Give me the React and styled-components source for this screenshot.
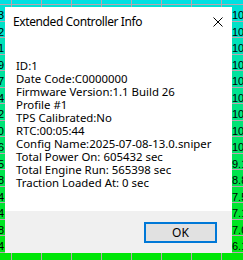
import React from "react";
import styled, { createGlobalStyle } from "styled-components";

const Global = createGlobalStyle`
  html, body { margin: 0; padding: 0; }
  body {
    width: 243px;
    height: 260px;
    overflow: hidden;
    position: relative;
    font-family: "Noto Sans", "Open Sans", sans-serif;
  }
`;

const ROW_H = 16.5;
const COLS = 9;

const Grid = styled.div`
  display: flex;
  flex-direction: column;
  margin-top: -11.5px;
  margin-left: -18px;
  width: 261px;
  overflow: hidden;
`;

const Row = styled.div`
  display: grid;
  grid-template-columns: repeat(${COLS}, 30px);
  height: ${ROW_H}px;
  box-sizing: border-box;
  border-bottom: 1px solid #b9a4ae;
  background: ${(p) => p.$bg};
`;

const Cell = styled.div`
  box-sizing: border-box;
  border-right: 1px solid #b9a4ae;
  font-family: "Liberation Sans", Arial, sans-serif;
  font-size: 11px;
  line-height: 12px;
  color: #000;
  white-space: nowrap;
  overflow: hidden;
  text-align: ${(p) => (p.$first ? "right" : "left")};
  padding: ${(p) => (p.$first ? "4px 7px 0 0" : "4px 0 0 10px")};
`;

const Dialog = styled.div`
  position: absolute;
  left: 5px;
  top: 7px;
  width: 227px;
  height: 246px;
  background: #fff;
  display: flex;
  flex-direction: column;
`;

const TitleBar = styled.div`
  display: flex;
  align-items: center;
  justify-content: space-between;
  height: 30px;
  padding: 0 9px 0 8px;
  box-sizing: border-box;
`;

const Title = styled.div`
  font-size: 12px;
  letter-spacing: -0.4px;
  color: #000;
  margin-top: -2px;
`;

const Close = styled.svg`
  width: 10px;
  height: 10px;
`;

const Body = styled.div`
  flex: 1;
  padding: 22px 0 0 11px;
  font-size: 11.4px;
  line-height: 13px;
  color: #000;
`;

const Line = styled.div`
  white-space: nowrap;
  height: 13px;
`;

const Footer = styled.div`
  height: 42px;
  background: #f0f0f0;
  display: flex;
  justify-content: flex-end;
  align-items: flex-start;
  padding: 11px 15px 0 0;
  box-sizing: border-box;
`;

const Button = styled.button`
  width: 73px;
  height: 21px;
  box-sizing: border-box;
  border: 2px solid #0078d7;
  background: #e1e1e1;
  font-family: "Noto Sans", "Open Sans", sans-serif;
  font-size: 12px;
  color: #000;
  padding: 0;
  line-height: 15px;
`;

const mix = (a, b, t) => Math.round(a + (b - a) * t);
const rowColor = (i, n) => {
  const t = i / (n - 1);
  const g = mix(224, 230, t);
  const b = mix(226, 8, t);
  return `rgb(0,${g},${b})`;
};

const leftVals = ["", "103", "102", "101", "109", "107", "104", "102", "10.0", "9.6", "8.5", "7.8", "7.4", "7.4", "6.8", "6.4", ""];
const rightVals = ["", "108", "107", "106", "105", "104", "103", "102", "101", "100", "9.1", "8.8", "7.5", "7.1", "7.0", "6.1", ""];
const midVals = ["", "", "", "", "", "", "", "", "", "", "", "", "", "", "", "60.3", ""];

const lines = [
  "ID:1",
  "Date Code:C0000000",
  "Firmware Version:1.1 Build 26",
  "Profile #1",
  "TPS Calibrated:No",
  "RTC:00:05:44",
  "Config Name:2025-07-08-13.0.sniper",
  "Total Power On: 605432 sec",
  "Total Engine Run: 565398 sec",
  "Traction Loaded At: 0 sec",
];

export default function App() {
  const n = leftVals.length;
  return (
    <>
      <Global />
      <Grid>
        {leftVals.map((lv, i) => (
          <Row key={i} $bg={rowColor(i, n)}>
            {Array.from({ length: COLS }).map((_, c) => (
              <Cell key={c} $first={c === 0}>
                {c === 0 ? lv : c === COLS - 1 ? rightVals[i] : midVals[i]}
              </Cell>
            ))}
          </Row>
        ))}
      </Grid>
      <Dialog>
        <TitleBar>
          <Title>Extended Controller Info</Title>
          <Close viewBox="0 0 10 10">
            <path d="M0.5 0.5 L9.5 9.5 M9.5 0.5 L0.5 9.5" stroke="#000" strokeWidth="1" fill="none" />
          </Close>
        </TitleBar>
        <Body>
          {lines.map((l) => (
            <Line key={l}>{l}</Line>
          ))}
        </Body>
        <Footer>
          <Button>OK</Button>
        </Footer>
      </Dialog>
    </>
  );
}
